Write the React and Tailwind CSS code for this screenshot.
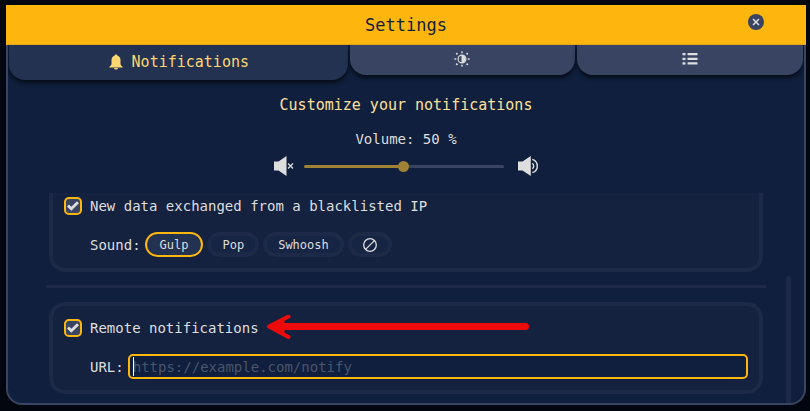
import { useState } from 'react';

const SOUNDS = ['Gulp', 'Pop', 'Swhoosh', 'None'];

function BellIcon() {
  return (
    <svg width="16" height="16" viewBox="0 0 16 16" fill="currentColor" aria-hidden="true">
      <path d="M8 0.500c0.700 0 1.200 0.400 1.300 1.100c2 0.600 3.200 2.300 3.200 4.500v3.600c0 1 0.600 1.800 1.800 2.700c0.600 0.500 0.500 1.200-0.300 1.200H2c-0.800 0-0.900-0.700-0.300-1.200c1.200-0.900 1.800-1.700 1.800-2.700V6.100c0-2.200 1.200-3.900 3.200-4.500C6.800 0.900 7.300 0.500 8 0.500z" />
      <path d="M6 14h4a2 1.600 0 0 1-4 0z" />
    </svg>
  );
}

function BrightnessIcon() {
  return (
    <svg width="16" height="16" viewBox="0 0 16 16" aria-hidden="true">
      <circle cx="8" cy="8" r="3.900" fill="none" stroke="currentColor" strokeWidth="1.200" />
      <path d="M7.500 4a4 4 0 0 1 0 8z" fill="currentColor" />
      <g fill="currentColor">
        <rect x="7.300" y="0.300" width="1.400" height="2" />
        <rect x="7.300" y="13.700" width="1.400" height="2" />
        <rect x="0.300" y="7.300" width="2" height="1.400" />
        <rect x="13.700" y="7.300" width="2" height="1.400" />
        <circle cx="2.800" cy="2.800" r="1" />
        <circle cx="13.200" cy="2.800" r="1" />
        <circle cx="2.800" cy="13.200" r="1" />
        <circle cx="13.200" cy="13.200" r="1" />
      </g>
    </svg>
  );
}

function ListIcon() {
  return (
    <svg width="16" height="12" viewBox="0 0 16 12" fill="currentColor" aria-hidden="true">
      <rect x="0.500" y="0" width="3" height="2.300" />
      <rect x="5.500" y="0" width="10" height="2.300" rx="0.500" />
      <rect x="0.500" y="4.800" width="3" height="2.300" />
      <rect x="5.500" y="4.800" width="10" height="2.300" rx="0.500" />
      <rect x="0.500" y="9.300" width="3" height="2.300" />
      <rect x="5.500" y="9.300" width="10" height="2.300" rx="0.500" />
    </svg>
  );
}

function MuteIcon() {
  return (
    <svg width="22" height="20" viewBox="0 0 22 20" aria-hidden="true">
      <path d="M0 5.500h4.500L12.500 0v20L4.500 14.500H0z" fill="currentColor" />
      <path d="M14 7.500l5 5M19 7.500l-5 5" stroke="currentColor" strokeWidth="1.300" />
    </svg>
  );
}

function LoudIcon() {
  return (
    <svg width="27" height="20" viewBox="0 0 27 20" aria-hidden="true">
      <path d="M6 5.500h4.500L18.800 0v20l-8.300-5.500H6z" fill="currentColor" />
      <path
        d="M20.300 7.200a3.500 3.500 0 0 1 0 5.600M20.300 3.300a7 7 0 0 1 0 13.400"
        fill="none"
        stroke="currentColor"
        strokeWidth="1.400"
      />
    </svg>
  );
}

function NoneIcon() {
  return (
    <svg width="14" height="14" viewBox="0 0 14 14" fill="none" stroke="currentColor" strokeWidth="1.300" aria-hidden="true">
      <circle cx="7" cy="7" r="6.300" />
      <path d="M2.600 11.400l8.800-8.800" />
    </svg>
  );
}

function CheckIcon() {
  return (
    <svg
      width="12"
      height="12"
      viewBox="0 0 12 12"
      fill="none"
      stroke="currentColor"
      strokeWidth="2.800"
      className="pointer-events-none col-start-1 row-start-1"
      aria-hidden="true"
    >
      <path d="M1 5.500l3.300 3.300L11 2.200" />
    </svg>
  );
}

function Arrow() {
  return (
    <svg width="264" height="26" viewBox="0 0 264 26" fill="none" stroke="#ec0a0a" strokeLinecap="round" strokeLinejoin="round" aria-hidden="true">
      <path d="M12 11.500H258.500" strokeWidth="7" />
      <path d="M21.500 1.500L2 11.500L21.500 22" strokeWidth="4" />
      <path d="M2 11.500L17 5.500V17.500z" fill="#ec0a0a" strokeWidth="1" />
    </svg>
  );
}

function Checkbox({ id, label }) {
  const [checked, setChecked] = useState(true);

  return (
    <div className="flex items-center gap-2">
      <span className="grid place-items-center">
        <input
          id={id}
          type="checkbox"
          checked={checked}
          onChange={(e) => setChecked(e.target.checked)}
          className="col-start-1 row-start-1 size-[18px] appearance-none rounded-[5px] border-2 border-[#fdb60d] bg-[#384462]"
        />
        {checked && <CheckIcon />}
      </span>
      <label htmlFor={id}>{label}</label>
    </div>
  );
}

export default function App() {
  const [volume, setVolume] = useState(50);
  const [sound, setSound] = useState('Gulp');
  const [url, setUrl] = useState('');

  return (
    <div className="min-h-screen bg-[#02060e] pt-[5px] pr-1 pb-1.5 pl-1.5 font-['DejaVu_Sans_Mono',monospace] text-[14px] leading-5 text-[#dedede]">

      {/* Title bar */}
      <header className="grid h-10 grid-cols-[1fr_auto_1fr] items-center border-b border-[#e2a41a] bg-[#fdb60d]">
        <h1 className="col-start-2 text-[17px] text-[#14203a]">Settings</h1>
        <button
          type="button"
          aria-label="Close"
          className="mt-[9px] mr-[42px] grid size-4 place-items-center self-start justify-self-end rounded-full bg-[#384462]"
        >
          <svg width="8" height="8" viewBox="0 0 8 8" stroke="currentColor" strokeWidth="1.500" aria-hidden="true">
            <path d="M1 1l6 6M7 1L1 7" />
          </svg>
        </button>
      </header>

      <main className="overflow-hidden rounded-b-2xl border-x-2 border-b-2 border-[#384462] bg-[#0f1f3d]">

        {/* Tabs */}
        <nav className="flex h-[35px] items-start gap-0.5 px-px">
          <button
            type="button"
            className="flex h-[35px] flex-[3] items-center justify-center gap-2 rounded-b-2xl bg-[#233251] pb-0.5 text-[15px] text-[#ffd772] shadow-[0_3px_4px_rgba(0,0,0,0.6)]"
          >
            <BellIcon />
            Notifications
          </button>
          <button
            type="button"
            aria-label="Appearance"
            className="flex h-[30px] flex-[2] items-center justify-center rounded-b-2xl bg-[#384462] pb-0.5 shadow-[0_3px_4px_rgba(0,0,0,0.6)]"
          >
            <BrightnessIcon />
          </button>
          <button
            type="button"
            aria-label="General"
            className="flex h-[30px] flex-[2] items-center justify-center rounded-b-2xl bg-[#384462] pb-0.5 shadow-[0_3px_4px_rgba(0,0,0,0.6)]"
          >
            <ListIcon />
          </button>
        </nav>

        <h2 className="mt-[13px] text-center text-[15px] leading-6 text-[#ffe09a]">Customize your notifications</h2>

        {/* Volume */}
        <div className="mt-3 text-center">
          <label htmlFor="volume">Volume: {volume} %</label>
        </div>
        <div className="mt-[7px] flex items-center justify-center gap-2">
          <MuteIcon />
          <input
            id="volume"
            type="range"
            min="0"
            max="100"
            value={volume}
            onChange={(e) => setVolume(Number(e.target.value))}
            style={{ backgroundImage: `linear-gradient(to right, #a08235 ${volume}%, #384462 ${volume}%)` }}
            className="h-[3px] w-[200px] appearance-none rounded-full [&::-webkit-slider-thumb]:size-[11px] [&::-webkit-slider-thumb]:appearance-none [&::-webkit-slider-thumb]:rounded-full [&::-webkit-slider-thumb]:bg-[#a08235]"
          />
          <LoudIcon />
        </div>

        <div className="mt-[17px] flex items-end gap-5 pr-[13px] pl-[38px]">
          <div className="min-w-0 flex-1 pb-[9px]">

            {/* Blacklisted IP */}
            <section className="mx-[3px] flex flex-col gap-3.5 rounded-b-2xl border-x-4 border-b-4 border-[#1c2947] bg-[#142240] px-[11px] pt-px pb-[11px]">
              <div className="flex h-6 items-center">
                <Checkbox id="blacklist" label="New data exchanged from a blacklisted IP" />
              </div>
              <div className="flex items-center gap-1 pl-[26px]">
                <span>Sound:</span>
                {SOUNDS.map((name) => (
                  <button
                    key={name}
                    type="button"
                    aria-label={name}
                    aria-pressed={sound === name}
                    onClick={() => setSound(name)}
                    className={`flex h-[25px] items-center rounded-full text-[12px] ${
                      sound === name
                        ? 'border-2 border-[#fdb60d] bg-[#233251] px-[13px]'
                        : 'border-4 border-[#1c2947] bg-[#172544] px-[11px]'
                    }`}
                  >
                    {name === 'None' ? <NoneIcon /> : name}
                  </button>
                ))}
              </div>
            </section>

            <hr className="mt-[13px] mb-3.5 h-[3px] border-0 bg-[#1c2947]" />

            {/* Remote notifications */}
            <section className="mx-[3px] flex flex-col gap-3.5 rounded-2xl border-4 border-[#1c2947] bg-[#142240] px-[11px] pt-2.5 pb-[11px]">
              <div className="flex h-6 items-center gap-2">
                <Checkbox id="remote" label="Remote notifications" />
                <Arrow />
              </div>
              <div className="flex items-center gap-1 pl-[26px]">
                <label htmlFor="url">URL:</label>
                <div className="relative flex flex-1">
                  <input
                    id="url"
                    type="text"
                    value={url}
                    onChange={(e) => setUrl(e.target.value)}
                    placeholder="https://example.com/notify"
                    className="h-[25px] w-full rounded-[5px] border-2 border-[#fdb60d] bg-[#0f1f3d] px-[3px] outline-none placeholder:text-[#4a556b]"
                  />
                  <span className="pointer-events-none absolute inset-y-[3px] left-[5px] w-px bg-white" />
                </div>
              </div>
            </section>
          </div>

          <div className="h-[127px] w-[5px] rounded-t-full bg-[#1c2947]" />
        </div>
      </main>
    </div>
  );
}
